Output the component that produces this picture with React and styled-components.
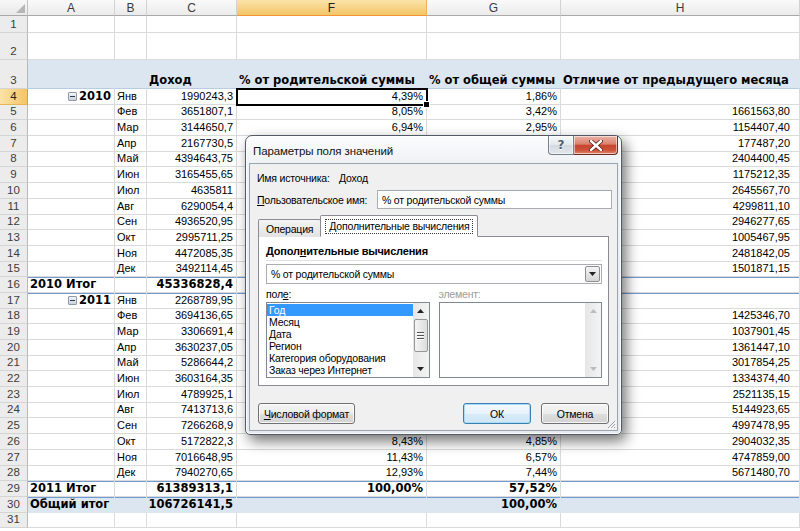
import React from 'react';
import styled, { createGlobalStyle } from 'styled-components';

const GlobalStyle = createGlobalStyle`
  html, body { margin: 0; padding: 0; background: #fff; }
  body { font-family: "Liberation Sans", Arial, sans-serif; overflow: hidden; }
`;

const GRID = '28px 87px 32px 90px 190px 134px 239px';
const ROW_H = 15.7;
const BLUE = '#6f9ad2';
const GRIDLINE = '#dadada';

const year2010 = [
  ['Янв', '1990243,3', ''],
  ['Фев', '3651807,1', '1661563,80'],
  ['Мар', '3144650,7', '1154407,40'],
  ['Апр', '2167730,5', '177487,20'],
  ['Май', '4394643,75', '2404400,45'],
  ['Июн', '3165455,65', '1175212,35'],
  ['Июл', '4635811', '2645567,70'],
  ['Авг', '6290054,4', '4299811,10'],
  ['Сен', '4936520,95', '2946277,65'],
  ['Окт', '2995711,25', '1005467,95'],
  ['Ноя', '4472085,35', '2481842,05'],
  ['Дек', '3492114,45', '1501871,15'],
];

const year2011 = [
  ['Янв', '2268789,95', ''],
  ['Фев', '3694136,65', '1425346,70'],
  ['Мар', '3306691,4', '1037901,45'],
  ['Апр', '3630237,05', '1361447,10'],
  ['Май', '5286644,2', '3017854,25'],
  ['Июн', '3603164,35', '1334374,40'],
  ['Июл', '4789925,1', '2521135,15'],
  ['Авг', '7413713,6', '5144923,65'],
  ['Сен', '7266268,9', '4997478,95'],
  ['Окт', '5172822,3', '2904032,35'],
  ['Ноя', '7016648,95', '4747859,00'],
  ['Дек', '7940270,65', '5671480,70'],
];

const num = s => parseFloat(s.replace(',', '.'));
const pct = (v, t) => (v / t * 100).toFixed(2).replace('.', ',') + '%';
const GRAND = 106726141.5;

function buildRows() {
  const rows = [
    { n: 1, h: 17, type: 'blank' },
    { n: 2, h: 27, type: 'blank' },
    { n: 3, h: 29, type: 'head' },
  ];
  let n = 4;
  [['2010', year2010, '45336828,4'], ['2011', year2011, '61389313,1']].forEach(([year, months, total]) => {
    const t = num(total);
    months.forEach(([m, v, diff], i) => {
      rows.push({
        n: n++, h: ROW_H, type: 'data',
        year: i === 0 ? year : null,
        blueTop: i === 0 && year === '2011',
        cells: [m, v, pct(num(v), t), pct(num(v), GRAND), diff],
      });
    });
    rows.push({
      n: n++, h: ROW_H, type: 'total', blueTop: true,
      cells: [year + ' Итог', total, '100,00%', pct(t, GRAND)],
    });
  });
  rows.push({ n: n++, h: ROW_H, type: 'grand', blueTop: true, cells: ['Общий итог', '106726141,5', '', '100,00%'] });
  rows.push({ n: n++, h: ROW_H, type: 'blank' });
  return rows;
}

/* ---------- sheet ---------- */

const Page = styled.div`
  position: relative;
  width: 800px;
  height: 531px;
  overflow: hidden;
  background: #fff;
`;

const SheetRow = styled.div`
  display: grid;
  grid-template-columns: ${GRID};
  height: ${p => p.$h}px;
  background: ${p => (p.$band ? '#dce6f1' : '#fff')};
`;

const Corner = styled.div`
  box-sizing: border-box;
  background: linear-gradient(#f7f7f7, #e9e9e9);
  border-right: 1px solid #c4c4c4;
  border-bottom: 1px solid #a9a9a9;
  display: flex;
  align-items: flex-end;
  justify-content: flex-end;
  padding: 0 2px 2px 0;
`;

const ColHead = styled.div`
  box-sizing: border-box;
  display: flex;
  align-items: center;
  justify-content: center;
  font-size: 12px;
  color: ${p => (p.$active ? '#222' : '#3c3c3c')};
  background: ${p => (p.$active ? 'linear-gradient(#fbe3a8, #f3c566)' : 'linear-gradient(#fafafa, #ebebeb)')};
  border-right: 1px solid ${p => (p.$active ? '#e9b457' : '#d2d2d2')};
  border-bottom: 1px solid ${p => (p.$active ? '#f29436' : '#a9a9a9')};
`;

const RowHead = styled.div`
  box-sizing: border-box;
  display: flex;
  align-items: flex-end;
  justify-content: center;
  padding-bottom: 1px;
  font-size: 11.5px;
  line-height: 13px;
  color: ${p => (p.$active ? '#222' : '#3c3c3c')};
  background: ${p => (p.$active ? 'linear-gradient(90deg, #fbe3a8, #f3c566)' : '#ececec')};
  border-right: 1px solid ${p => (p.$active ? '#f29436' : '#b9b9b9')};
  border-bottom: 1px solid ${p => (p.$active ? '#e9b457' : '#d4d4d4')};
`;

const Cell = styled.div`
  position: relative;
  box-sizing: border-box;
  display: flex;
  align-items: flex-end;
  justify-content: ${p => (p.$align === 'right' ? 'flex-end' : 'flex-start')};
  padding: 0 ${p => p.$pr || 3}px 1px 2px;
  white-space: nowrap;
  line-height: 13px;
  font-family: ${p => (p.$bold ? '"DejaVu Sans", Verdana, sans-serif' : '"Liberation Sans", Arial, sans-serif')};
  font-size: ${p => (p.$bold ? 11.5 : 11)}px;
  font-weight: ${p => (p.$bold ? 700 : 400)};
  color: #000;
  border-right: 1px solid ${p => (p.$band ? 'transparent' : GRIDLINE)};
  border-bottom: 1px solid ${p => (p.$bandLine ? '#b8cce4' : p.$band ? 'transparent' : GRIDLINE)};
  box-shadow: ${p => (p.$blueTop ? `inset 0 1px 0 ${BLUE}` : 'none')};
  ${p => p.$sel && `
    z-index: 2;
    outline: 2px solid #000;
    outline-offset: -1px;
    &::after {
      content: '';
      position: absolute;
      right: -4px;
      bottom: -4px;
      width: 5px;
      height: 5px;
      background: #000;
      border: 1px solid #fff;
    }
  `}
`;

const YearLabel = styled.span`
  display: inline-flex;
  align-items: center;
  gap: 2px;
`;

const Collapse = styled.span`
  position: relative;
  box-sizing: border-box;
  width: 9px;
  height: 9px;
  border: 1px solid #8d9aae;
  border-radius: 1px;
  background: linear-gradient(#f4f6f9, #c9d2de);
  &::after {
    content: '';
    position: absolute;
    left: 1px;
    right: 1px;
    top: 3px;
    height: 1px;
    background: #2d3a4d;
  }
`;

function Sheet() {
  const rows = buildRows();
  return (
    <div>
      <SheetRow $h={16}>
        <Corner>
          <svg width="9" height="9" viewBox="0 0 9 9"><polygon points="9,0 9,9 0,9" fill="#b6b6b6" /></svg>
        </Corner>
        {['A', 'B', 'C', 'F', 'G', 'H'].map(l => (
          <ColHead key={l} $active={l === 'F'}>{l}</ColHead>
        ))}
      </SheetRow>
      {rows.map(r => {
        const band = r.type === 'head' || r.type === 'grand';
        const common = { $band: band, $bandLine: r.type === 'head', $blueTop: r.blueTop };
        let cells;
        if (r.type === 'blank') {
          cells = [0, 1, 2, 3, 4, 5].map(i => <Cell key={i} />);
        } else if (r.type === 'head') {
          cells = ['', '', 'Доход', '% от родительской суммы', '% от общей суммы', 'Отличие от предыдущего месяца']
            .map((t, i) => <Cell key={i} {...common} $bold>{t}</Cell>);
        } else if (r.type === 'data') {
          const [m, v, f, g, h] = r.cells;
          cells = [
            <Cell key="a" {...common} $align="right" $bold>
              {r.year && <YearLabel><Collapse />{r.year}</YearLabel>}
            </Cell>,
            <Cell key="b" {...common}>{m}</Cell>,
            <Cell key="c" {...common} $align="right">{v}</Cell>,
            <Cell key="f" {...common} $align="right" $sel={r.n === 4}>{f}</Cell>,
            <Cell key="g" {...common} $align="right">{g}</Cell>,
            <Cell key="h" {...common} $align="right" $pr={9}>{h}</Cell>,
          ];
        } else {
          const [label, v, f, g] = r.cells;
          cells = [
            <Cell key="a" {...common} $bold>{label}</Cell>,
            <Cell key="b" {...common} />,
            <Cell key="c" {...common} $align="right" $bold>{v}</Cell>,
            <Cell key="f" {...common} $align="right" $bold>{f}</Cell>,
            <Cell key="g" {...common} $align="right" $bold>{g}</Cell>,
            <Cell key="h" {...common} />,
          ];
        }
        return (
          <SheetRow key={r.n} $h={r.h} $band={band}>
            <RowHead $active={r.n === 4}>{r.n}</RowHead>
            {cells}
          </SheetRow>
        );
      })}
    </div>
  );
}

/* ---------- dialog ---------- */

const Window = styled.div`
  position: absolute;
  left: 245px;
  top: 135px;
  width: 377px;
  height: 300px;
  box-sizing: border-box;
  padding: 0 3px 3px;
  display: flex;
  flex-direction: column;
  border: 1px solid #505a66;
  border-radius: 7px 7px 5px 5px;
  background: linear-gradient(180deg, #fbfcfd 0%, #eef1f5 10%, #e6eaef 100%);
  box-shadow: 4px 6px 14px rgba(0, 0, 0, 0.55), inset 0 0 0 1px rgba(255, 255, 255, 0.85);
  font-family: "Liberation Sans", Arial, sans-serif;
  font-size: 10.5px;
  letter-spacing: -0.2px;
  color: #000;
`;

const TitleBar = styled.div`
  height: 27px;
  display: flex;
  justify-content: space-between;
  align-items: flex-start;
`;

const Title = styled.div`
  padding: 8px 0 0 4px;
  font-size: 11.5px;
  letter-spacing: -0.1px;
  line-height: 14px;
  color: #111;
`;

const CaptionButtons = styled.div`
  display: flex;
`;

const CapButton = styled.div`
  box-sizing: border-box;
  width: ${p => p.$w}px;
  height: 19px;
  display: flex;
  align-items: center;
  justify-content: center;
  border: 1px solid ${p => (p.$close ? '#6e2b22' : '#75818f')};
  border-top: none;
  ${p => (p.$close ? 'border-left: none;' : '')}
  border-radius: ${p => (p.$close ? '0 0 4px 0' : '0 0 0 4px')};
  background: ${p => (p.$close
    ? 'linear-gradient(#eab3a8 0%, #db806d 45%, #c7452f 52%, #cc5138 78%, #e3886f 100%)'
    : 'linear-gradient(#f7f9fb 0%, #e4e8ed 48%, #d3d9e0 52%, #e2e7ec 100%)')};
  box-shadow: inset 0 0 0 1px rgba(255, 255, 255, 0.55);
  font-family: "DejaVu Sans", sans-serif;
  font-weight: 700;
  font-size: 12px;
  color: #56606c;
  text-shadow: 0 1px 0 #fff;
`;

const Body = styled.div`
  position: relative;
  flex: 1;
  display: flex;
  flex-direction: column;
  padding: 7px 8px 0 8px;
  background: #f0f0f0;
  border: 1px solid #9aa3ae;
`;

const FieldRow = styled.div`
  display: flex;
  align-items: center;
  height: ${p => p.$h}px;
  margin: 0 ${p => p.$mr || 0}px ${p => p.$mb || 0}px -1px;
`;

const FieldLabel = styled.span`
  flex: 0 0 ${p => p.$w}px;
  line-height: 14px;
  white-space: nowrap;
`;

const TextBox = styled.div`
  flex: 1;
  box-sizing: border-box;
  height: 100%;
  display: flex;
  align-items: center;
  padding-left: 4px;
  background: #fff;
  border: 1px solid #abadb3;
  border-top-color: #a4a8b0;
`;

const Key = styled.u`
  text-decoration: underline;
  text-underline-offset: 1px;
`;

const TabStrip = styled.div`
  position: relative;
  z-index: 1;
  display: flex;
  align-items: flex-end;
  height: 22px;
  margin-top: 6px;
  margin-bottom: -1px;
`;

const Tab = styled.div`
  box-sizing: border-box;
  height: ${p => (p.$active ? 22 : 18)}px;
  display: flex;
  align-items: center;
  padding: 0 ${p => (p.$active ? 4 : 7)}px;
  margin-left: ${p => (p.$active ? -1 : 0)}px;
  border: 1px solid #898c95;
  border-bottom: ${p => (p.$active ? '1px solid #fff' : 'none')};
  border-radius: 2px 2px 0 0;
  background: ${p => (p.$active ? '#fff' : 'linear-gradient(#f3f3f3, #e3e3e3)')};
`;

const FocusText = styled.span`
  padding: 0 3px;
  line-height: 13px;
  border: 1px dotted #333;
`;

const Panel = styled.div`
  box-sizing: border-box;
  height: 150px;
  display: flex;
  flex-direction: column;
  padding: 7px 6px 6px 7px;
  background: #fff;
  border: 1px solid #898c95;
`;

const Heading = styled.div`
  font-weight: 700;
  font-size: 11px;
  letter-spacing: -0.2px;
  line-height: 14px;
  padding-bottom: 2px;
  border-bottom: 1px solid #dfe3e8;
`;

const Combo = styled.div`
  box-sizing: border-box;
  height: 20px;
  margin-top: 3px;
  display: flex;
  align-items: center;
  justify-content: space-between;
  padding: 0 1px 0 4px;
  background: #fff;
  border: 1px solid #abadb3;
`;

const DropButton = styled.div`
  box-sizing: border-box;
  width: 15px;
  height: 16px;
  display: flex;
  align-items: center;
  justify-content: center;
  background: linear-gradient(#f4f4f4, #d6d6d6);
  border: 1px solid #8e8f8f;
  border-radius: 2px;
`;

const ListGrid = styled.div`
  display: grid;
  grid-template-columns: 1fr 1fr;
  column-gap: 9px;
`;

const ListLabel = styled.div`
  margin-top: 4px;
  height: 12px;
  line-height: 12px;
  color: ${p => (p.$disabled ? '#9b9b9b' : '#000')};
`;

const ListBox = styled.div`
  box-sizing: border-box;
  height: 76px;
  margin-top: 2px;
  display: flex;
  background: #fff;
  border: 1px solid #828790;
`;

const Items = styled.div`
  flex: 1;
  padding: 1px 0 0 0;
  overflow: hidden;
`;

const Item = styled.div`
  height: 12px;
  line-height: 12px;
  padding-left: 2px;
  white-space: nowrap;
  color: ${p => (p.$selected ? '#fff' : '#000')};
  background: ${p => (p.$selected ? '#3399ff' : 'transparent')};
`;

const ScrollBar = styled.div`
  flex: 0 0 16px;
  display: flex;
  flex-direction: column;
  background: linear-gradient(90deg, #e6e6e6, #f4f4f4);
`;

const Arrow = styled.div`
  height: 16px;
  display: flex;
  align-items: center;
  justify-content: center;
`;

const Thumb = styled.div`
  box-sizing: border-box;
  height: 33px;
  margin: 0 1px;
  display: flex;
  flex-direction: column;
  align-items: center;
  justify-content: center;
  gap: 2px;
  border: 1px solid #979797;
  border-radius: 2px;
  background: linear-gradient(90deg, #f5f5f5, #dcdcdc);
`;

const Grip = styled.span`
  width: 7px;
  height: 1px;
  background: #555;
  box-shadow: 0 1px 0 #fff;
`;

const Track = styled.div`
  flex: 1;
`;

const ButtonRow = styled.div`
  display: flex;
  justify-content: space-between;
  margin-top: 17px;
`;

const ButtonGroup = styled.div`
  display: flex;
  gap: 10px;
`;

const Button = styled.div`
  box-sizing: border-box;
  width: ${p => p.$w}px;
  height: 21px;
  display: flex;
  align-items: center;
  justify-content: center;
  border: 1px solid ${p => (p.$default ? '#3c7fb1' : '#707070')};
  border-radius: 3px;
  background: ${p => (p.$default
    ? 'linear-gradient(#f3f9fd 0%, #e8f3fb 50%, #d8ebf8 51%, #cfe6f6 100%)'
    : 'linear-gradient(#f4f4f4 0%, #ececec 50%, #dedede 51%, #d2d2d2 100%)')};
  box-shadow: inset 0 0 0 1px ${p => (p.$default ? '#a9dcf6' : 'rgba(255,255,255,0.8)')};
`;

const SizeGrip = styled.svg`
  position: absolute;
  right: 1px;
  bottom: 1px;
`;

const Tri = ({ down, color = '#222' }) => (
  <svg width="7" height="4" viewBox="0 0 7 4">
    <polygon points={down ? '0,0 7,0 3.5,4' : '0,4 7,4 3.5,0'} fill={color} />
  </svg>
);

function Dialog() {
  const fields = ['Год', 'Месяц', 'Дата', 'Регион', 'Категория оборудования', 'Заказ через Интернет'];
  return (
    <Window>
      <TitleBar>
        <Title>Параметры поля значений</Title>
        <CaptionButtons>
          <CapButton $w={26}>?</CapButton>
          <CapButton $w={44} $close>
            <svg width="14" height="11" viewBox="0 0 14 11">
              <path d="M2 1 L12 10 M12 1 L2 10" stroke="#5a1a12" strokeWidth="4" strokeLinecap="round" />
              <path d="M2 1 L12 10 M12 1 L2 10" stroke="#fff" strokeWidth="2.4" strokeLinecap="round" />
            </svg>
          </CapButton>
        </CaptionButtons>
      </TitleBar>
      <Body>
        <FieldRow $h={14} $mb={5}>
          <FieldLabel $w={82}>Имя источника:</FieldLabel>
          <span>Доход</span>
        </FieldRow>
        <FieldRow $h={19} $mr={-3}>
          <FieldLabel $w={120}><Key>П</Key>ользовательское имя:</FieldLabel>
          <TextBox>% от родительской суммы</TextBox>
        </FieldRow>
        <TabStrip>
          <Tab>Операция</Tab>
          <Tab $active><FocusText>Дополнительные вычисления</FocusText></Tab>
        </TabStrip>
        <Panel>
          <Heading>Допол<Key>н</Key>ительные вычисления</Heading>
          <Combo>
            <span>% от родительской суммы</span>
            <DropButton><Tri down /></DropButton>
          </Combo>
          <ListGrid>
            <div>
              <ListLabel>пол<Key>е</Key>:</ListLabel>
              <ListBox>
                <Items>
                  {fields.map((f, i) => <Item key={f} $selected={i === 0}>{f}</Item>)}
                </Items>
                <ScrollBar>
                  <Arrow><Tri /></Arrow>
                  <Thumb><Grip /><Grip /><Grip /></Thumb>
                  <Track />
                  <Arrow><Tri down /></Arrow>
                </ScrollBar>
              </ListBox>
            </div>
            <div>
              <ListLabel $disabled>элемент:</ListLabel>
              <ListBox>
                <Items />
                <ScrollBar>
                  <Arrow><Tri color="#bcbcbc" /></Arrow>
                  <Track />
                  <Arrow><Tri down color="#bcbcbc" /></Arrow>
                </ScrollBar>
              </ListBox>
            </div>
          </ListGrid>
        </Panel>
        <ButtonRow>
          <Button $w={97}><span><Key>Ч</Key>исловой формат</span></Button>
          <ButtonGroup>
            <Button $w={68} $default>ОК</Button>
            <Button $w={68}>Отмена</Button>
          </ButtonGroup>
        </ButtonRow>
        <SizeGrip width="11" height="11" viewBox="0 0 11 11">
          <path d="M10 3 L3 10 M10 6 L6 10 M10 9 L9 10" stroke="#9aa0a8" strokeWidth="1" />
          <path d="M11 4 L4 11 M11 7 L7 11" stroke="#fff" strokeWidth="1" />
        </SizeGrip>
      </Body>
    </Window>
  );
}

export default function App() {
  return (
    <Page>
      <GlobalStyle />
      <Sheet />
      <Dialog />
    </Page>
  );
}
